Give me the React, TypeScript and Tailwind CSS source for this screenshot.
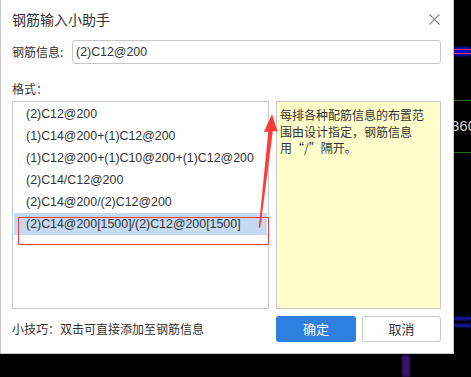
import React from 'react';

const formats = [
  '(2)C12@200',
  '(1)C14@200+(1)C12@200',
  '(1)C12@200+(1)C10@200+(1)C12@200',
  '(2)C14/C12@200',
  '(2)C14@200/(2)C12@200',
  '(2)C14@200[1500]/(2)C12@200[1500]',
];

const CJK = "font-['Noto_Sans_CJK_SC',sans-serif]";
const LATIN = "font-['Liberation_Sans','Noto_Sans_CJK_SC',sans-serif]";

function Backdrop() {
  // bits of the drawing canvas peeking out behind the dialog
  return (
    <>
      <div className="absolute left-[454px] top-[47px] w-[17px] h-[9px] bg-[#1010c8] blur-[1px]" />
      <div className="absolute left-[454px] top-[49px] w-[17px] h-[1px] bg-[#ff3050]" />
      <div className="absolute left-[454px] top-[53px] w-[17px] h-[1px] bg-[#ff3050]" />
      <div className="absolute left-[454px] top-[100px] w-[17px] h-[1px] bg-[#1d6b1d]" />
      <div className="absolute left-[454px] top-[152px] w-[17px] h-[1px] bg-[#1d6b1d]" />
      <div className={`absolute left-[451px] top-[116px] text-[15px] leading-[20px] text-[#cfcfcf] ${LATIN}`}>360</div>
      <div className="absolute left-[454px] top-[317px] w-[17px] h-[3px] bg-[#1818c0] blur-[1px]" />
      <div className="absolute left-[454px] top-[324px] w-[17px] h-[3px] bg-[#1818c0] blur-[1px]" />
      <div className="absolute left-[402px] top-[355px] w-[8px] h-[22px] bg-[#3a1470] blur-[1px]" />
    </>
  );
}

export default function App() {
  return (
    <div className="relative w-[471px] h-[377px] bg-black overflow-hidden">
      <Backdrop />

      <div className={`relative w-[454px] h-[354px] bg-white border-l border-r border-b border-[#c8c8c8] flex flex-col pl-[11px] pr-[12px] text-[#333] ${CJK}`}>
        {/* title */}
        <div className="h-[38px] flex items-center justify-between">
          <span className="text-[14px] leading-none">钢筋输入小助手</span>
          <svg width="11" height="11" viewBox="0 0 11 11" className="mr-[1px]">
            <path d="M0.5 0.5 L10.5 10.5 M10.5 0.5 L0.5 10.5" stroke="#8a8a8a" strokeWidth="1.2" />
          </svg>
        </div>

        {/* rebar info input */}
        <div className="mt-[2px] h-[24px] flex items-center">
          <span className="w-[60px] text-[12px]">钢筋信息:</span>
          <div className={`flex-1 h-[24px] border border-[#c8c8c8] rounded-[3px] flex items-center pl-[3px] text-[12.4px] ${LATIN}`}>
            (2)C12@200
          </div>
        </div>

        <div className="mt-[13px] h-[24px] flex items-center text-[12px]">格式：</div>

        {/* panels */}
        <div className="h-[208px] flex gap-[7px]">
          <div className="relative w-[257px] border border-[#c8c8c8] p-[1px]">
            {formats.map((f, i) => (
              <div
                key={f}
                className={`h-[22px] flex items-center pl-[12px] text-[12.4px] ${LATIN} ${i === formats.length - 1 ? 'bg-[#c5daf1]' : ''}`}
              >
                {f}
              </div>
            ))}
            <div className="absolute left-[5px] top-[115px] w-[251px] h-[28px] border border-[#f03c3c]" />
          </div>
          <div className="flex-1 bg-[#ffffcc] border border-[#c8c8c8] pl-[3px] pt-[5px] text-[12px] leading-[16.5px]">
            <div>每排各种配筋信息的布置范</div>
            <div>围由设计指定，钢筋信息</div>
            <div>用“/”隔开。</div>
          </div>
        </div>

        {/* footer */}
        <div className="mt-[7px] h-[26px] flex items-center">
          <span className="flex-1 text-[12px]">小技巧：双击可直接添加至钢筋信息</span>
          <button className="w-[80px] h-[26px] rounded-[3px] bg-[#2e7fdf] text-white text-[13px]">确定</button>
          <button className="ml-[6px] w-[79px] h-[26px] rounded-[3px] border border-[#c8c8c8] bg-white text-[13px] text-[#333]">取消</button>
        </div>

        {/* red annotation arrow */}
        <svg className="absolute left-0 top-0 pointer-events-none" width="454" height="354">
          <polygon
            points="271,114 276.5,131.5 271.8,131 259.3,228 257.8,227.5 267.3,131.5 262.8,132"
            fill="#ff3b3b"
          />
        </svg>
      </div>
    </div>
  );
}
